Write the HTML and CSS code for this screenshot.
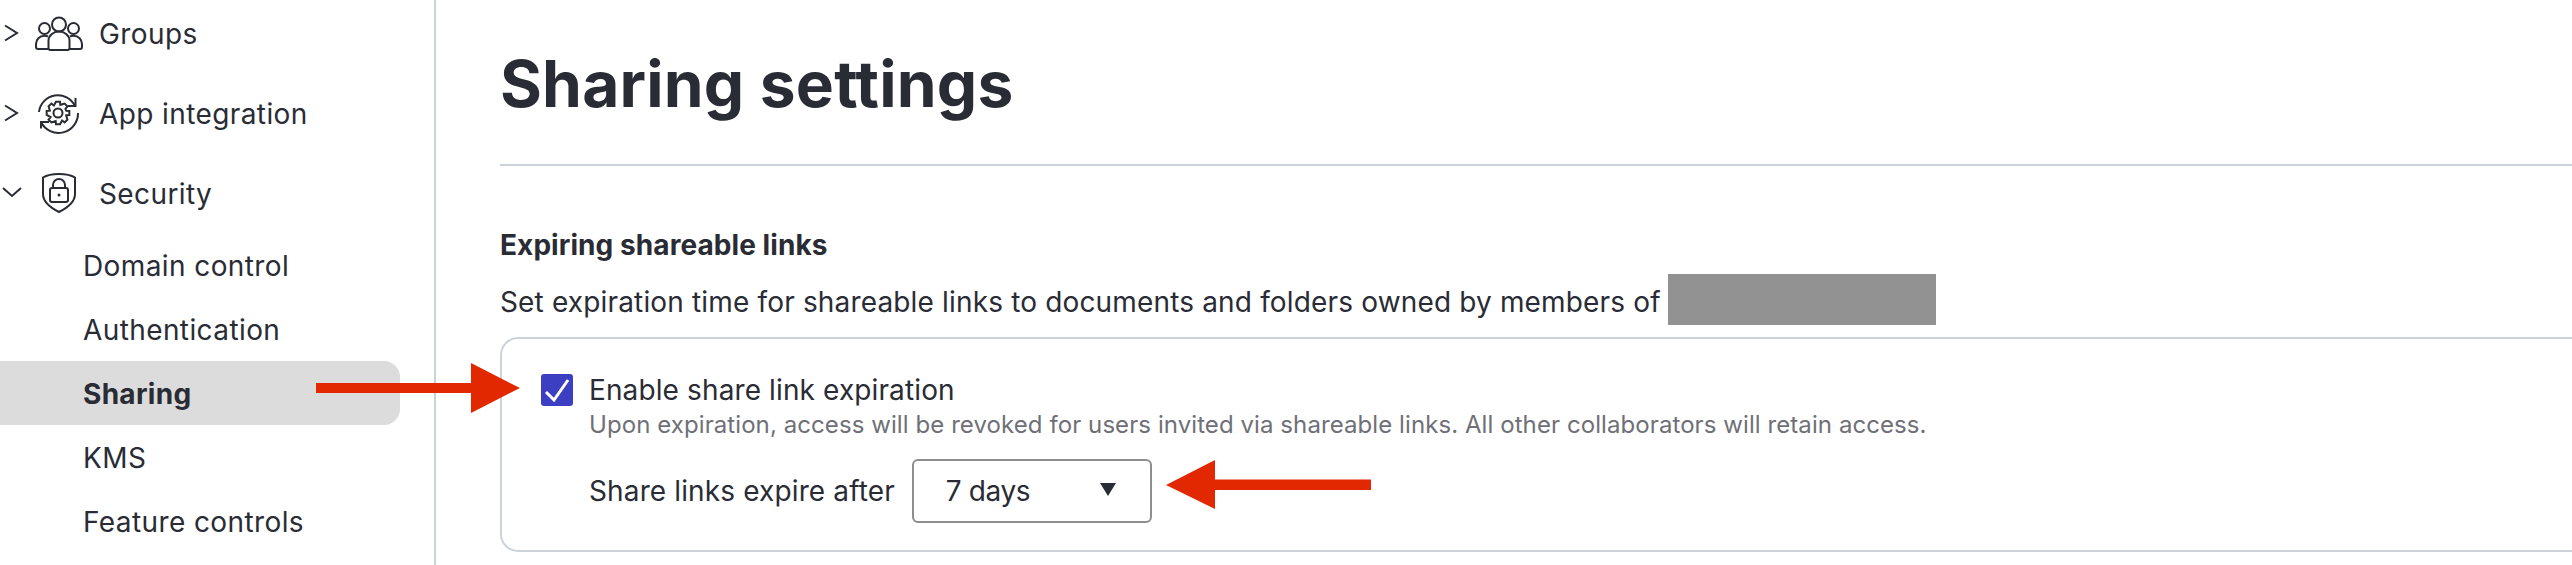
FILE: index.html
```html
<!DOCTYPE html>
<html>
<head>
    <meta charset="utf-8">
    <title>Sharing settings</title>
    <link rel="stylesheet" href="styles.css">
</head>
<body>
    <div class="page">
        <nav class="sidebar">
            <div class="nav-item">
                <svg class="chevron" width="22" height="22" viewBox="0 0 22 22"><path d="M4 3.500l12 7.500-12 7.500"/></svg>
                <svg class="nav-icon" width="50" height="36" viewBox="0 -1 50 36">
                    <circle cx="25" cy="8.500" r="7"/>
                    <path d="M14.500 33v-8.500a10.500 9 0 0 1 21 0V32a2 2 0 0 1-2 2h-17a2 2 0 0 1-2-2z"/>
                    <circle cx="10.500" cy="12.500" r="5.500"/>
                    <circle cx="39.500" cy="12.500" r="5.500"/>
                    <path d="M14 20.500c-1-.5-2-.7-3.500-.7C5.500 19.800 2 23.500 2 28v3a2 2 0 0 0 2 2h10.500"/>
                    <path d="M36 20.500c1-.5 2-.7 3.500-.7 5 0 8.500 3.700 8.500 8.200v3a2 2 0 0 1-2 2H35.500"/>
                </svg>
                <span>Groups</span>
            </div>
            <div class="nav-item">
                <svg class="chevron" width="22" height="22" viewBox="0 0 22 22"><path d="M4 3.500l12 7.500-12 7.500"/></svg>
                <svg class="nav-icon" width="50" height="42" viewBox="-4 0 50 42">
                    <path d="M1 20A19 19 0 0 1 37 14"/>
                    <path d="M30 14h7.500V6"/>
                    <path d="M40 21A19.500 19.500 0 0 1 3 30"/>
                    <path d="M11 30H3v6.500"/>
                    <path transform="translate(20 21)" d="M8.170-2.340L11.330-2V2L8.170 2.340 9.420 6.600 6.600 9.420 4.120 7.430 2 11.330H-2L-2.340 8.170-6.600 9.420-9.420 6.600-7.430 4.120-11.330 2V-2L-8.170-2.340-9.420-6.600-6.600-9.420-4.120-7.430-2-11.330H2L2.340-8.170 6.600-9.420 9.420-6.600 7.430-4.120z"/>
                    <circle cx="20" cy="21" r="4.500"/>
                </svg>
                <span>App integration</span>
            </div>
            <div class="nav-item">
                <svg class="chevron chevron-open" width="22" height="22" viewBox="0 0 22 22"><path d="M2 6l9 8 9-8"/></svg>
                <svg class="nav-icon" width="50" height="42" viewBox="-6 0 50 42">
                    <path d="M19 2c6 0 12 1 16 3.500V22c0 8-8 14-16 18C11 36 3 30 3 22V5.500C7 3 13 2 19 2z"/>
                    <rect x="10" y="16" width="18" height="14" rx="2"/>
                    <path d="M13 16v-3a6 6 0 0 1 12 0v3"/>
                    <circle class="dot" cx="19" cy="23" r="1.500"/>
                </svg>
                <span>Security</span>
            </div>
            <div class="sub-item">Domain control</div>
            <div class="sub-item">Authentication</div>
            <div class="sub-item active">Sharing</div>
            <div class="sub-item">KMS</div>
            <div class="sub-item">Feature controls</div>
        </nav>

        <main class="content">
            <h1>Sharing settings</h1>
            <h2>Expiring shareable links</h2>
            <div class="intro">
                <span>Set expiration time for shareable links to documents and folders owned by members of</span>
                <div class="redacted"></div>
            </div>
            <div class="card">
                <div class="check-row">
                    <span class="checkbox">
                        <svg width="32" height="32" viewBox="0 0 32 32"><path d="M5 18l8 8L27 6"/></svg>
                    </span>
                    <span>Enable share link expiration</span>
                </div>
                <p class="hint">Upon expiration, access will be revoked for users invited via shareable links. All other collaborators will retain access.</p>
                <div class="expire-row">
                    <span>Share links expire after</span>
                    <div class="dropdown">
                        <span class="dropdown-value">7 days</span>
                        <span class="caret"></span>
                    </div>
                </div>
            </div>
        </main>
    </div>

    <!-- annotations on top of the screenshot -->
    <svg class="arrow arrow-right" width="204" height="50" viewBox="0 0 204 50"><path d="M0 20h155V0l49 25-49 25V30H0z"/></svg>
    <svg class="arrow arrow-left" width="205" height="49" viewBox="0 0 205 49"><path d="M205 19.500H49V0L0 25l49 24V30h156z"/></svg>
</body>
</html>
```

FILE: styles.css
```css
html, body {
    margin: 0;
    height: 565px;
    overflow: hidden;
    background: #fff;
}
body {
    position: relative;
    font-family: Inter, "Noto Sans", sans-serif;
    font-size: 28px;
    color: #2a2c35;
}
.page {
    display: flex;
    width: 2700px;
    height: 565px;
}

/* sidebar */
.sidebar {
    flex: none;
    box-sizing: border-box;
    width: 436px;
    height: 565px;
    border-right: 2px solid #cdd2d9;
    letter-spacing: 0.4px;
}
.nav-item {
    display: flex;
    align-items: center;
    height: 80px;
}
.nav-item span {
    padding-top: 2px;
}
.nav-item:first-child {
    margin-top: -7px;
}
.chevron {
    flex: none;
    margin-left: 1px;
}
.chevron path, .nav-icon path, .nav-icon circle, .nav-icon rect {
    fill: none;
    stroke: #2a2c35;
    stroke-width: 2;
}
.nav-icon circle.dot {
    fill: #2a2c35;
    stroke: none;
}
.nav-icon {
    flex: none;
    margin: 0 15px 0 11px;
}
.sub-item {
    display: flex;
    align-items: center;
    box-sizing: border-box;
    width: 400px;
    height: 64px;
    padding: 2px 0 0 83px;
    border-radius: 0 16px 16px 0;
}
.sub-item.active {
    background: #dcdcdc;
    font-weight: 700;
    letter-spacing: 0.3px;
}

/* main column */
.content {
    flex: 1;
    padding-left: 64px;
}
h1 {
    margin: 0;
    padding: 44px 0 40px;
    font-size: 64px;
    line-height: 80px;
    font-weight: 700;
    letter-spacing: 0.2px;
    border-bottom: 2px solid #cdd2d9;
}
h2 {
    margin: 61px 0 0;
    font-size: 28px;
    line-height: 36px;
    font-weight: 700;
    letter-spacing: 0.07px;
}
.intro {
    display: flex;
    gap: 7px;
    height: 51px;
    margin-top: 11px;
    letter-spacing: 0.16px;
}
.intro span {
    line-height: 36px;
    padding-top: 10px;
}
.redacted {
    width: 268px;
    height: 51px;
    background: #929292;
}

.card {
    box-sizing: border-box;
    height: 215px;
    margin-top: 12px;
    padding: 33px 0 0 39px;
    border: 2px solid #cdd2d9;
    border-radius: 18px;
}
.check-row {
    display: flex;
    align-items: center;
    gap: 16px;
    height: 36px;
    letter-spacing: 0.12px;
}
.checkbox {
    width: 32px;
    height: 32px;
    border-radius: 3px;
    background: #3d3fc2;
}
.checkbox svg {
    display: block;
}
.checkbox path {
    fill: none;
    stroke: #fff;
    stroke-width: 3;
}
.hint {
    margin: 0 0 0 48px;
    padding-top: 1px;
    font-size: 24px;
    line-height: 32px;
    letter-spacing: 0.08px;
    color: #6f7077;
}
.expire-row {
    display: flex;
    align-items: center;
    gap: 17px;
    margin: 18px 0 0 48px;
    letter-spacing: 0.13px;
}
.dropdown {
    display: flex;
    align-items: center;
    justify-content: space-between;
    box-sizing: border-box;
    width: 240px;
    height: 64px;
    padding: 0 34px 0 32px;
    border: 2px solid #8e8e8e;
    border-radius: 6px;
}
.dropdown-value {
    letter-spacing: -0.4px;
}
.caret {
    width: 0;
    height: 0;
    margin-top: -4px;
    border-left: 8px solid transparent;
    border-right: 8px solid transparent;
    border-top: 13px solid #2a2c35;
}

/* red arrows drawn over the page */
.arrow {
    position: absolute;
}
.arrow path {
    fill: #e22800;
}
.arrow-right {
    left: 316px;
    top: 363px;
}
.arrow-left {
    left: 1166px;
    top: 460px;
}
```
